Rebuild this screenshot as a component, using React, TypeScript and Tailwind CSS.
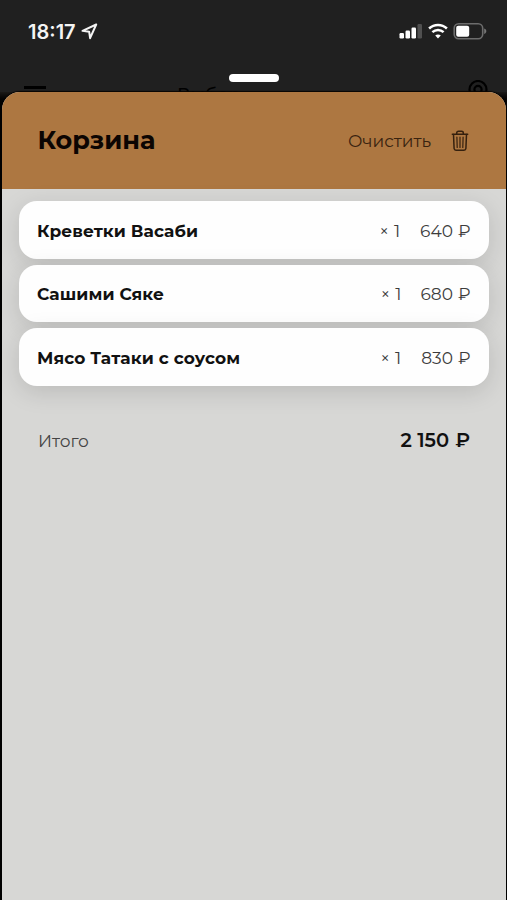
const items = [
  { name: "Креветки Васаби", count: 1, price: "640", gap: "gap-[20px]" },
  { name: "Сашими Сяке", count: 1, price: "680", gap: "gap-[19px]" },
  { name: "Мясо Татаки с соусом", count: 1, price: "830", gap: "gap-[20px]" },
];

function StatusBar() {
  return (
    <div className="flex h-[62px] items-center justify-between pl-7 pr-5 text-white">
      <div className="flex items-center gap-[5px]">
        <span className="pt-px font-['Inter',sans-serif] text-[20px] font-semibold leading-6 text-[#f4f4f4]">18:17</span>
        <svg width="17" height="17" viewBox="0 0 17 17" fill="none" stroke="#f4f4f4" strokeWidth="2" strokeLinejoin="round">
          <path d="M15.200 1.500 1.500 7.800l6.700 1 .9 6.400z" />
        </svg>
      </div>
      <div className="flex items-center gap-[5px]">
        <svg width="24" height="16" viewBox="0 0 24 16" fill="white">
          <rect x="0.5" y="10" width="4.5" height="5.5" rx="1.2" />
          <rect x="6.5" y="7.5" width="4.5" height="8" rx="1.2" />
          <rect x="12.5" y="4.5" width="4.5" height="11" rx="1.2" />
          <rect x="18.5" y="1" width="4.5" height="14.5" rx="1.2" fill="#505050" />
        </svg>
        <svg width="20" height="16" viewBox="0 0 20 16" fill="none" stroke="white" strokeWidth="2.5">
          <path d="M1.1 5.5C6.2.7 13.8.7 18.9 5.5" />
          <path d="M4.400 9.100c3.200-2.900 8-2.900 11.200 0" />
          <path d="m10 15.500-2.800-3c1.600-1.300 4-1.300 5.600 0z" fill="white" stroke="none" />
        </svg>
        <svg width="34" height="18" viewBox="0 0 34 18" fill="none">
          <rect x="1.2" y="1.7" width="28.5" height="15" rx="4.5" stroke="#6d6d6d" strokeWidth="1.6" />
          <rect x="3.2" y="3.7" width="13" height="11" rx="2" fill="white" />
          <path d="M31.200 6.500c2.800.9 2.800 4.500 0 5.400z" fill="#777" />
        </svg>
      </div>
    </div>
  );
}

function PageBehind() {
  return (
    <div className="flex h-[30px] items-start justify-between overflow-hidden pl-6 pr-[19px] text-black">
      <div className="mt-[24px] h-[3px] w-[22px] bg-black" />
      <span className="-ml-[96px] mt-[21px] text-[18px] font-medium leading-6">Выбор</span>
      <svg className="mt-[18px]" width="20" height="24" viewBox="0 0 20 24" fill="none" stroke="black" strokeWidth="2.2">
        <path d="M10 23C5 18 1.500 14 1.500 9.500a8.500 8.500 0 0 1 17 0C18.500 14 15 18 10 23Z" />
        <circle cx="10" cy="9.500" r="3.600" />
      </svg>
    </div>
  );
}

function TrashIcon() {
  return (
    <svg width="18" height="22" viewBox="0 0 18 22" fill="none" stroke="#35200e" strokeWidth="1.5" strokeLinecap="round" strokeLinejoin="round">
      <path d="M1.300 4.300h15.400" />
      <path d="M5.700 4.100V3c0-1 .7-1.700 1.800-1.700h3c1.100 0 1.800.7 1.800 1.700v1.100" />
      <path d="m2.500 4.500.6 14c.1 1.100.8 1.700 1.900 1.700h8c1.100 0 1.800-.6 1.900-1.700l.6-14" />
      <path d="m5.900 7.200.3 10.300M9 7.200v10.300M12.100 7.200l-.3 10.300" strokeWidth="1.200" />
    </svg>
  );
}

export default function App() {
  return (
    <div className="flex h-[900px] w-[507px] flex-col overflow-hidden bg-[#202020] font-['Montserrat','Inter',sans-serif]">
      <StatusBar />
      <PageBehind />
      <div className="relative flex flex-1 flex-col bg-gradient-to-b from-[#1b1917] from-0% via-black via-[14px] to-black pl-[2px] pr-[1px]">
        <div className="absolute left-[229px] top-[-18px] h-2 w-[50px] rounded-full bg-white" />
        <main className="flex flex-1 flex-col overflow-hidden rounded-t-[18px] bg-[#d7d7d5] shadow-[0_-1px_1px_#080401]">
          <header className="flex h-[97px] items-center justify-between bg-[#ad7741] pl-[35.5px] pr-[37px]">
            <h1 className="-mt-[2px] text-[25.5px] font-bold leading-8 text-[#0c0502]">Корзина</h1>
            <button className="flex items-center gap-[20px] text-[#392310]">
              <span className="text-[17px] leading-6">Очистить</span>
              <TrashIcon />
            </button>
          </header>
          <ul className="flex flex-col gap-[6px] px-[17px] pt-3">
            {items.map((item) => (
              <li
                key={item.name}
                className="flex h-[57.5px] items-center justify-between rounded-[18px] bg-[#fefefe] pl-[18px] pr-[18.5px] pt-[3px] shadow-[0_6px_24px_rgba(0,0,0,0.13)]"
              >
                <span className="text-[17px] font-bold tracking-[0.08px] text-[#111]">{item.name}</span>
                <span className={`flex items-center text-[17px] text-[#3c3c3c] ${item.gap}`}>
                  <span className="flex items-center gap-[5px]">
                    <span className="text-[17px]">×</span>
                    <span>{item.count}</span>
                  </span>
                  <span>
                    {item.price}
                    <span className="ml-[5px]">₽</span>
                  </span>
                </span>
              </li>
            ))}
          </ul>
          <div className="mt-[43px] flex h-6 items-center justify-between px-9">
            <span className="pt-[3px] text-[17px] text-[#444]">Итого</span>
            <span className="text-[19.5px] font-semibold text-[#111]">
              2 150
              <span className="ml-[6px]">₽</span>
            </span>
          </div>
        </main>
      </div>
    </div>
  );
}
